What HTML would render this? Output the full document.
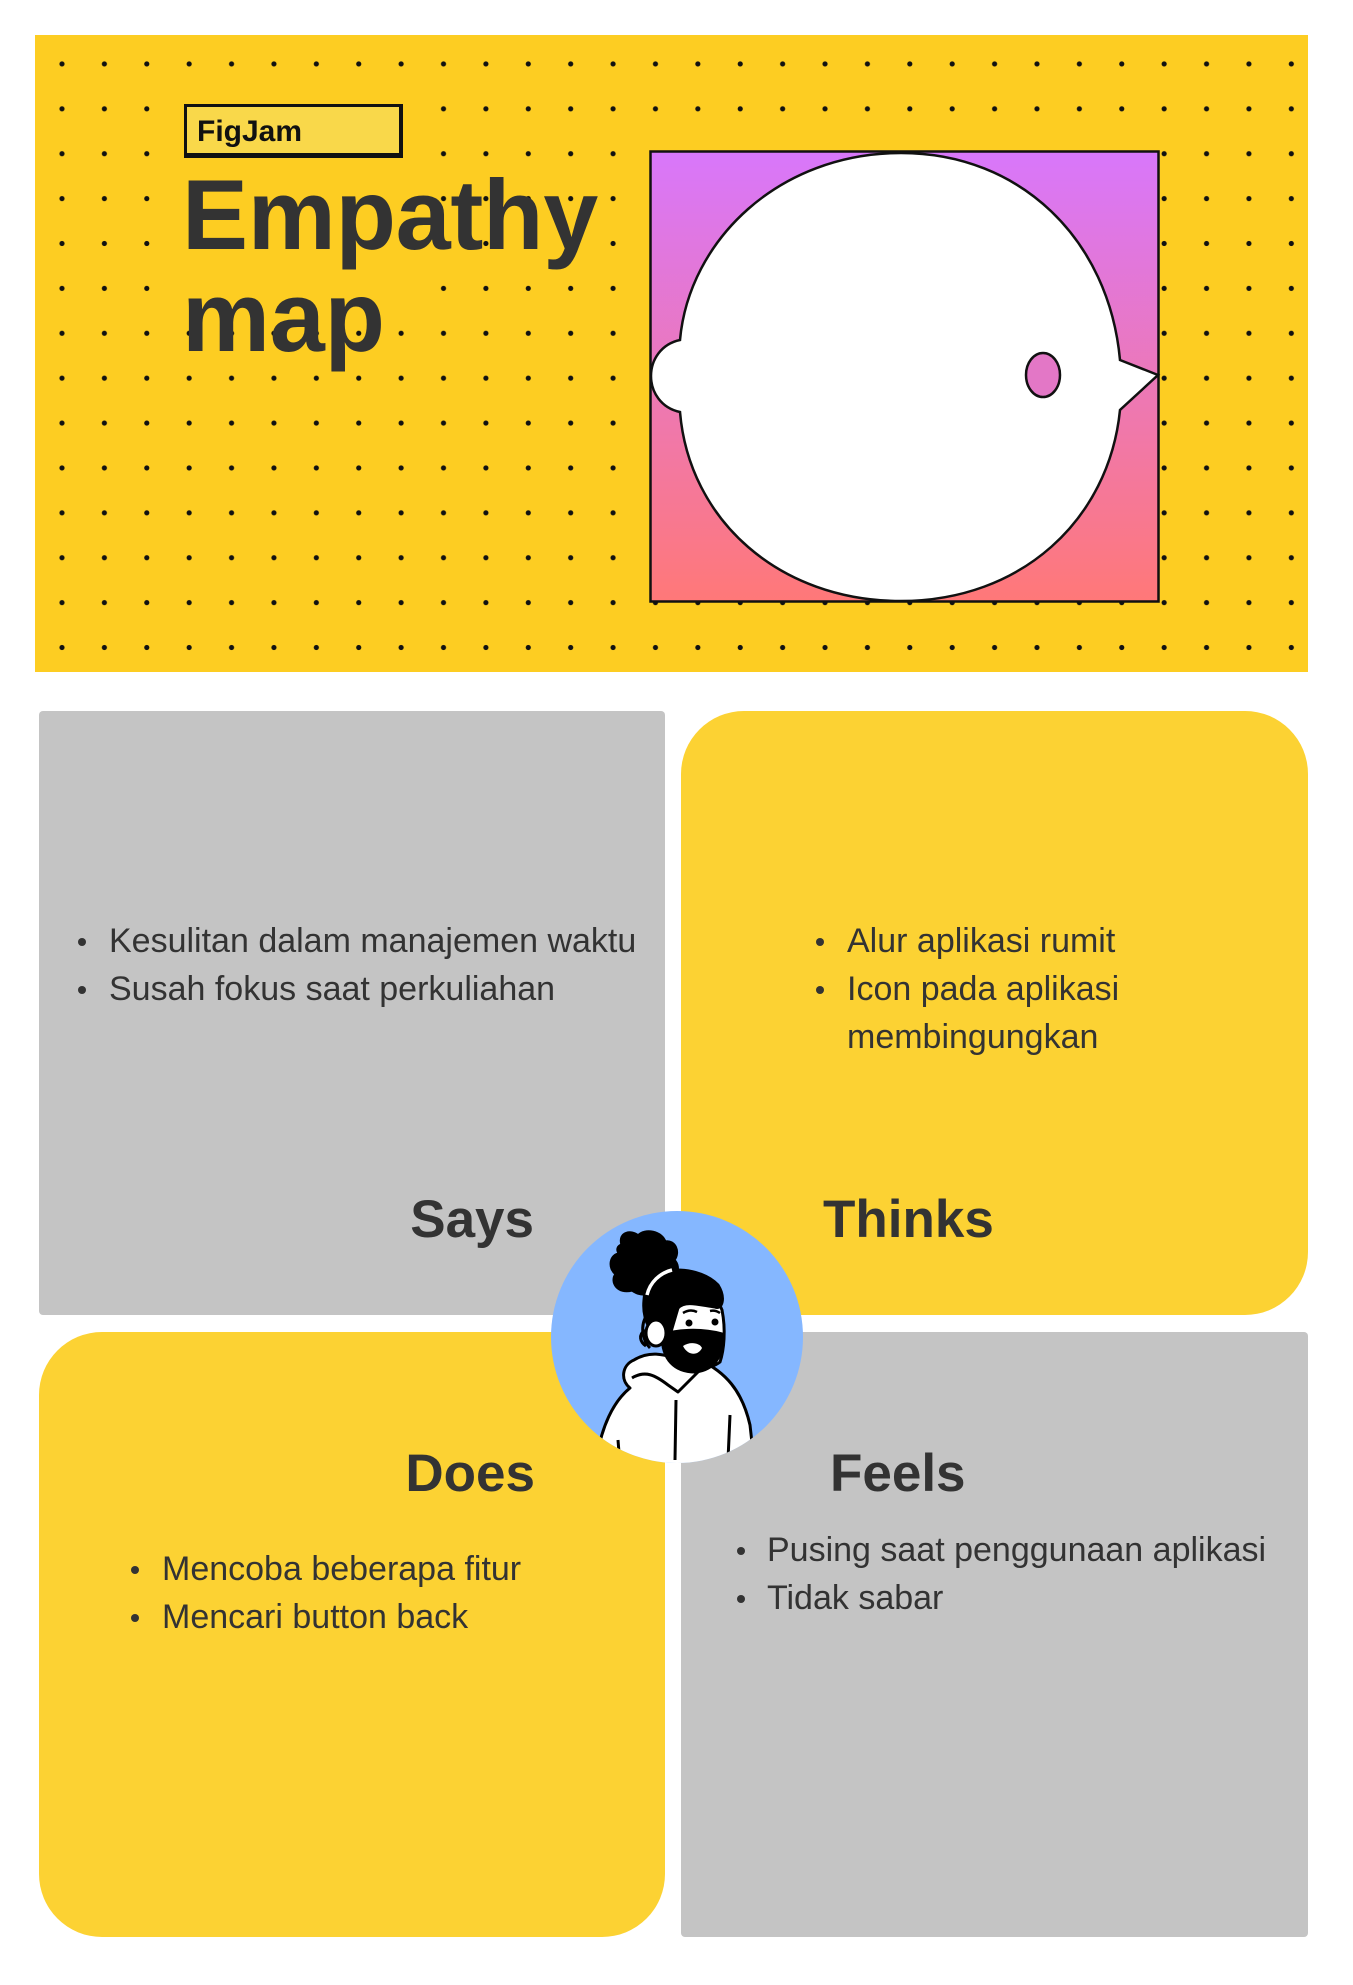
<!DOCTYPE html>
<html><head><meta charset="utf-8">
<style>
*{margin:0;padding:0;box-sizing:border-box}
body{width:1353px;height:1985px;background:#fff;position:relative;overflow:hidden;font-family:"Liberation Sans",sans-serif;color:#333}
.abs{position:absolute}
#hero{left:35px;top:35px;width:1273px;height:637px;background-color:#FDCD22;
background-image:radial-gradient(circle,#111 2.3px,transparent 2.8px);
background-size:42.4px 44.9px;background-position:5.8px 6.5px}
.cover{background:#FDCD22}
.fig{left:184px;top:104px;width:219px;height:54px;background:#F9D84A;border:3px solid #111;border-right-width:4px;border-bottom-width:5px;font-weight:bold;font-size:30px;line-height:1;padding-left:10px;padding-top:10px;color:#111}
.title{font-weight:bold;font-size:99px;line-height:1;color:#333;letter-spacing:-0.3px}
.q{position:absolute}
.g{background:#C4C4C4}
.y{background:#FCD233}
.t{position:absolute;font-size:34px;line-height:1}
.h{position:absolute;font-size:53px;font-weight:bold;line-height:1}
.b{position:absolute;width:8px;height:8px;border-radius:50%;background:#333}
</style></head><body>
<div id="hero" class="abs"></div>
<div class="abs cover" style="left:172px;top:92px;width:240px;height:205px"></div>
<div class="abs fig">FigJam</div>
<div class="abs title" style="left:182px;top:165px">Empathy</div>
<div class="abs title" style="left:182px;top:267px">map</div>

<svg class="abs" style="left:649px;top:150px" width="512" height="454" viewBox="0 0 512 454">
<defs><linearGradient id="pg" x1="0" y1="0" x2="0" y2="1"><stop offset="0" stop-color="#D877FB"/><stop offset="1" stop-color="#FF7878"/></linearGradient></defs>
<rect x="1.5" y="1.5" width="508" height="450" fill="url(#pg)" stroke="#111" stroke-width="2.5"/>
<path d="M31,190 C40,90 130,3 252,3 C372,3 460,90 471,210 L509,225 L471,260 C460,370 372,451 252,451 C130,451 40,370 31,262 C12,258 2,242 2,226 C2,210 12,194 31,190 Z" fill="#fff" stroke="#111" stroke-width="2.5"/>
<ellipse cx="394" cy="225" rx="17" ry="22" fill="#E377C6" stroke="#111" stroke-width="2.5"/>
</svg>

<div class="q g" style="left:39px;top:711px;width:626px;height:604px;border-radius:4px"></div>
<div class="q y" style="left:681px;top:711px;width:627px;height:604px;border-radius:63px 63px 63px 0"></div>
<div class="q y" style="left:39px;top:1332px;width:626px;height:605px;border-radius:63px 0 63px 63px"></div>
<div class="q g" style="left:681px;top:1332px;width:627px;height:605px;border-radius:4px"></div>

<div class="b" style="left:78px;top:938px"></div><div class="t" style="left:109px;top:924px">Kesulitan dalam manajemen waktu</div>
<div class="b" style="left:78px;top:986px"></div><div class="t" style="left:109px;top:972px">Susah fokus saat perkuliahan</div>
<div class="h" style="right:819px;top:1193px">Says</div>

<div class="b" style="left:816px;top:938px"></div><div class="t" style="left:847px;top:924px">Alur aplikasi rumit</div>
<div class="b" style="left:816px;top:986px"></div><div class="t" style="left:847px;top:972px">Icon pada aplikasi</div>
<div class="t" style="left:847px;top:1020px">membingungkan</div>
<div class="h" style="left:823px;top:1193px">Thinks</div>

<div class="h" style="right:818px;top:1447px">Does</div>
<div class="b" style="left:131px;top:1566px"></div><div class="t" style="left:162px;top:1552px">Mencoba beberapa fitur</div>
<div class="b" style="left:131px;top:1614px"></div><div class="t" style="left:162px;top:1600px">Mencari button back</div>

<div class="h" style="left:830px;top:1447px">Feels</div>
<div class="b" style="left:737px;top:1547px"></div><div class="t" style="left:767px;top:1533px">Pusing saat penggunaan aplikasi</div>
<div class="b" style="left:737px;top:1595px"></div><div class="t" style="left:767px;top:1581px">Tidak sabar</div>

<svg class="abs" style="left:550px;top:1210px" width="254" height="254" viewBox="0 0 254 254">
<defs><clipPath id="cc"><circle cx="127" cy="127" r="126"/></clipPath></defs>
<circle cx="127" cy="127" r="126" fill="#85B7FF"/>
<g clip-path="url(#cc)" stroke="#000" stroke-width="3" stroke-linejoin="round">
<path d="M45,260 C50,215 65,190 80,178 C70,170 72,155 84,150 C100,140 115,145 125,148 L150,150 C175,162 192,180 200,215 L205,260 Z" fill="#fff"/>
<path d="M125,250 L126,190 M178,250 L180,205 M68,230 L70,255" fill="none"/>
<path d="M82,168 C95,160 105,165 118,175 L128,182 L150,160" fill="none"/>
<path d="M115,88 C130,78 165,80 172,100 C176,120 174,140 170,152 C160,160 140,160 125,152 C115,145 110,125 112,105 Z" fill="#fff"/>
<path d="M112,125 C125,120 150,118 172,124 C174,145 165,160 145,162 C125,162 112,150 112,125 Z" fill="#000"/>
<path d="M133,136 C140,131 150,133 152,138 C148,146 138,146 133,136 Z" fill="#fff" stroke="none"/>
<path d="M96,70 C110,56 150,56 168,75 C176,88 172,100 165,97 C150,95 135,90 128,98 L118,132 C102,130 92,110 94,90 Z" fill="#000"/>
<path d="M97,105 C90,115 92,130 100,138 M95,120 C88,125 90,132 96,136" fill="none"/>
<ellipse cx="106" cy="123" rx="10" ry="13" fill="#fff"/>
<circle cx="139" cy="113" r="3.5" fill="#000" stroke="none"/><circle cx="165" cy="112" r="3.5" fill="#000" stroke="none"/>
<path d="M133,103 C138,100 143,100 147,102 M160,101 C164,100 167,101 170,103" fill="none" stroke-width="2.5"/>
<path d="M72,35 C68,22 82,20 88,26 C95,18 112,22 115,32 C125,30 130,42 124,50 C132,58 125,72 114,72 C110,84 92,88 82,80 C68,84 60,72 66,64 C58,58 60,44 70,44 C66,40 68,36 72,35 Z" fill="#000"/>
<path d="M97,85 C100,72 110,63 122,60" fill="none" stroke="#fff" stroke-width="3.5"/>
</g>
</svg>
</body></html>
